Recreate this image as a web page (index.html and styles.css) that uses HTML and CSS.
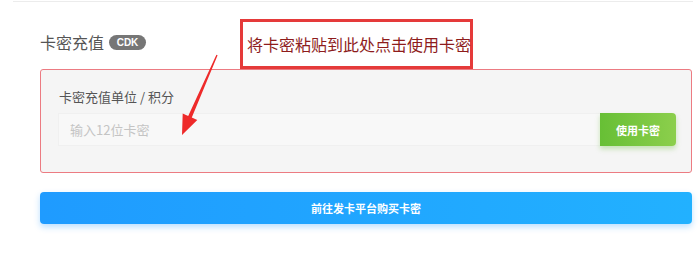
FILE: index.html
```html
<!DOCTYPE html>
<html>
	<head>
		<meta charset="utf-8">
		<title>卡密充值</title>
		<link rel="stylesheet" href="styles.css">
	</head>
	<body>
		<div class="topline"></div>
		<div class="box">
			<h3 class="title">卡密充值 <span class="badge">CDK</span></h3>
			<div class="panel">
				<label for="card" class="label">卡密充值单位 / 积分</label>
				<div class="row">
					<input type="text" id="card" class="input" placeholder="输入12位卡密">
					<button class="useBtn">使用卡密</button>
				</div>
			</div>
			<button class="buyBtn">前往发卡平台购买卡密</button>
		</div>

		<!-- 标注 -->
		<div class="note">将卡密粘贴到此处点击使用卡密</div>
		<svg class="arrow" width="60" height="90" viewBox="0 0 60 90">
			<polygon points="47.6,5.3 21.8,67.5 27.3,69.9 12,85 12.7,63.5 18.2,65.9 46.4,4.7" fill="#ee2a2a"/>
		</svg>
	</body>
</html>
```

FILE: styles.css
```css
*{
	margin: 0;
	padding: 0;
	box-sizing: border-box;
}
body{
	font-family: "Noto Sans CJK SC", "Liberation Sans", sans-serif;
	background: #fff;
	width: 700px;
	height: 253px;
	position: relative;
	overflow: hidden;
}
.topline{
	height: 1px;
	margin: 1px 7px 0 13px;
	background: #ececec;
}
.box{
	width: 652px;
	margin: 0 0 0 40px;
}
.title{
	font-size: 16px;
	font-weight: normal;
	color: #555;
	line-height: 22px;
	height: 22px;
	margin-top: 29px;
	display: flex;
	align-items: center;
}
.badge{
	display: inline-block;
	margin-left: 5px;
	width: 37px;
	height: 15px;
	line-height: 15px;
	border-radius: 8px;
	background: #767676;
	color: #fff;
	font-size: 10px;
	font-weight: bold;
	text-align: center;
	font-family: "Liberation Sans", sans-serif;
}
.panel{
	margin-top: 16px;
	border: 1px solid #ec7b82;
	border-radius: 3px;
	background: #f5f5f5;
	padding: 17px 15px 25px 17px;
	height: 104px;
}
.label{
	display: block;
	font-size: 13px;
	color: #555;
	line-height: 20px;
	margin-left: 1px;
}
.row{
	display: flex;
	margin-top: 6px;
	height: 33px;
}
.input{
	flex: 1;
	height: 33px;
	border: 1px solid #f0f0f0;
	border-right: none;
	background: #f8f8f8;
	padding: 0 11px;
	font-size: 13px;
	font-family: inherit;
	outline: none;
}
.input::placeholder{
	color: #c4c4c4;
}
.useBtn{
	width: 76px;
	height: 33px;
	border: none;
	border-radius: 0 4px 4px 0;
	background: linear-gradient(to right, #67bf35, #8ccf4c);
	box-shadow: 0 3px 5px rgba(110,190,60,.35);
	color: #fff;
	font-size: 11px;
	font-weight: bold;
	font-family: inherit;
}
.buyBtn{
	display: block;
	width: 652px;
	height: 32px;
	margin-top: 19px;
	border: none;
	border-radius: 4px;
	background: linear-gradient(to right, #1f9bff, #22b1ff);
	box-shadow: 0 3px 6px rgba(30,150,255,.3);
	color: #fff;
	font-size: 11px;
	font-weight: bold;
	font-family: inherit;
}
.note{
	position: absolute;
	left: 240px;
	top: 19px;
	width: 233px;
	height: 50px;
	border: 3px solid #e53a3a;
	background: #fff;
	color: #8e1c1c;
	font-size: 16px;
	line-height: 44px;
	padding-left: 4px;
	white-space: nowrap;
}
.arrow{
	position: absolute;
	left: 170px;
	top: 50px;
}
```
